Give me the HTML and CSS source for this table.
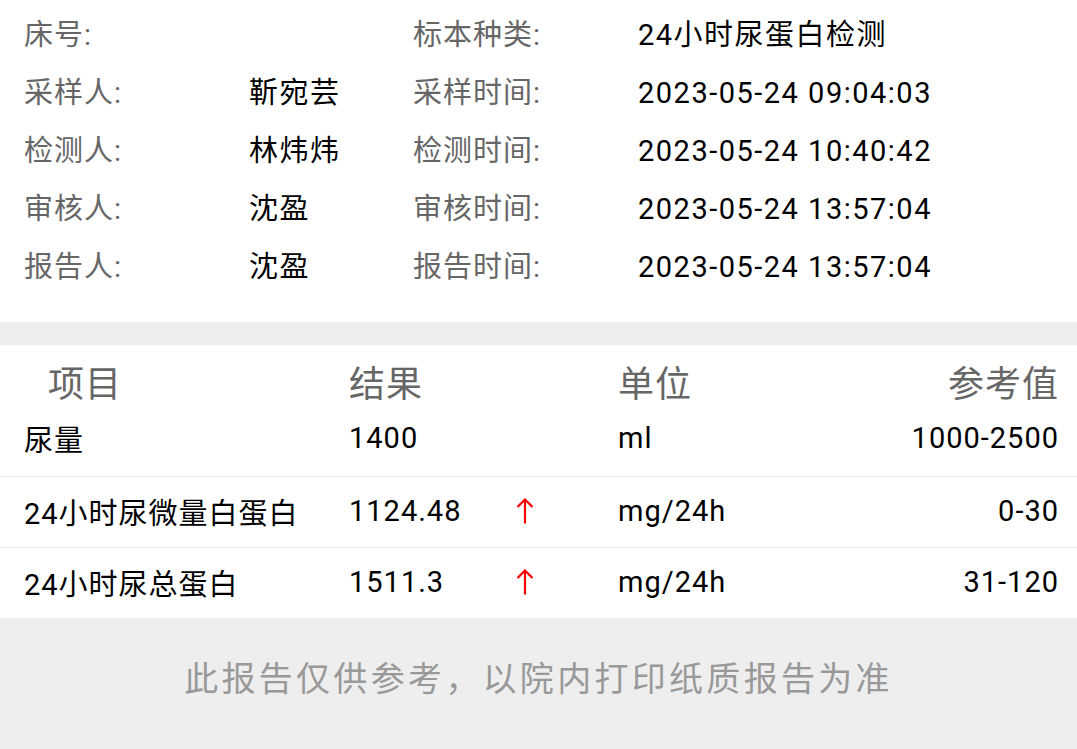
FILE: index.html
```html
<!DOCTYPE html>
<html lang="zh-CN">
<head>
<meta charset="utf-8">
<title>24小时尿蛋白检测报告</title>
<link rel="stylesheet" href="styles.css">
</head>
<body>
<section class="info">
  <div class="info-row"><span class="lbl">床号:</span><span class="val"></span><span class="lbl">标本种类:</span><span class="val">24小时尿蛋白检测</span></div>
  <div class="info-row"><span class="lbl">采样人:</span><span class="val">靳宛芸</span><span class="lbl">采样时间:</span><span class="val">2023-05-24 09:04:03</span></div>
  <div class="info-row"><span class="lbl">检测人:</span><span class="val">林炜炜</span><span class="lbl">检测时间:</span><span class="val">2023-05-24 10:40:42</span></div>
  <div class="info-row"><span class="lbl">审核人:</span><span class="val">沈盈</span><span class="lbl">审核时间:</span><span class="val">2023-05-24 13:57:04</span></div>
  <div class="info-row"><span class="lbl">报告人:</span><span class="val">沈盈</span><span class="lbl">报告时间:</span><span class="val">2023-05-24 13:57:04</span></div>
</section>
<div class="band"></div>
<section class="results">
  <div class="thead">
    <span class="th th-item">项目</span>
    <span class="th">结果</span>
    <span></span>
    <span class="th">单位</span>
    <span class="th th-ref">参考值</span>
  </div>
  <div class="trow trow-first">
    <span>尿量</span>
    <span>1400</span>
    <span></span>
    <span>ml</span>
    <span class="ref">1000-2500</span>
  </div>
  <div class="trow">
    <span>24小时尿微量白蛋白</span>
    <span>1124.48</span>
    <span class="flag"><svg width="18" height="26" viewBox="0 0 18 26"><path d="M9 1.5V25.5M1.5 9L9 1.5L16.5 9" fill="none" stroke="#ff0000" stroke-width="2.2"/></svg></span>
    <span>mg/24h</span>
    <span class="ref">0-30</span>
  </div>
  <div class="trow">
    <span>24小时尿总蛋白</span>
    <span>1511.3</span>
    <span class="flag"><svg width="18" height="26" viewBox="0 0 18 26"><path d="M9 1.5V25.5M1.5 9L9 1.5L16.5 9" fill="none" stroke="#ff0000" stroke-width="2.2"/></svg></span>
    <span>mg/24h</span>
    <span class="ref">31-120</span>
  </div>
</section>
<footer class="note">此报告仅供参考，以院内打印纸质报告为准</footer>
</body>
</html>
```

FILE: styles.css
```css
html, body {
  margin: 0;
  padding: 0;
  background: #ffffff;
  font-family: "Roboto", "Noto Sans CJK SC", sans-serif;
  color: #000;
  overflow: hidden;
}

.info {
  padding: 6px 0 26px 24px;
}

.info-row {
  display: grid;
  grid-template-columns: 225px 164px 225px 1fr;
  height: 58px;
  line-height: 58px;
  font-size: 29px;
  letter-spacing: 1.5px;
  white-space: nowrap;
}

.lbl {
  color: #666666;
  letter-spacing: 1px;
}

.val {
  color: #000000;
}

.band {
  height: 23px;
  background: #eeeeee;
}

.thead,
.trow {
  display: grid;
  grid-template-columns: 325px 167px 102px 1fr auto;
  padding: 0 19px 0 24px;
  white-space: nowrap;
}

.thead {
  padding-top: 18px;
  line-height: 44px;
  font-size: 36px;
  color: #666666;
  letter-spacing: 1px;
}

.th-item {
  padding-left: 24px;
}

.th-ref {
  text-align: right;
  letter-spacing: 1px;
  margin-right: -1px;
}

.trow {
  align-items: center;
  height: 67px;
  padding-bottom: 3px;
  font-size: 29px;
  letter-spacing: 1px;
  border-top: 1px solid #e9e9e9;
}

.trow-first {
  height: 62px;
  padding-bottom: 7px;
  border-top: none;
}

.ref {
  text-align: right;
  letter-spacing: 1px;
  margin-right: -1px;
}

.flag {
  display: flex;
  align-items: center;
  height: 100%;
}

.flag svg {
  display: block;
}

.note {
  height: 131px;
  box-sizing: border-box;
  padding-top: 39px;
  line-height: 44px;
  background: #eeeeee;
  color: #999999;
  font-size: 34px;
  letter-spacing: 3.3px;
  text-align: center;
}
```
